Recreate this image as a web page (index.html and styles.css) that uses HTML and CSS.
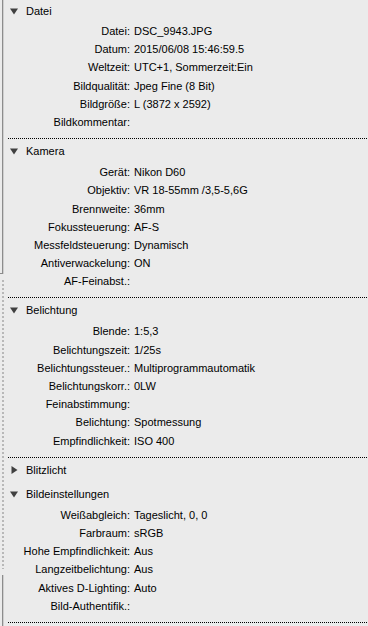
FILE: index.html
```html
<!DOCTYPE html>
<html lang="de">
<head>
<meta charset="utf-8">
<title>Bildinformationen</title>
<link rel="stylesheet" href="styles.css">
</head>
<body>
<div class="panel">
  <div class="rail">
    <div class="rail-solid rail-top"></div>
    <div class="rail-gap"></div>
    <div class="rail-dotted"></div>
    <div class="rail-gap"></div>
    <div class="rail-solid rail-bottom"></div>
  </div>
  <div class="main">
    <section class="section first">
      <div class="header">
        <svg class="tri" width="8" height="8" viewBox="0 0 8 8"><polygon points="0,1.5 8,1.5 4,7.5" /></svg>
        <span>Datei</span>
      </div>
      <div class="rows">
        <div class="label">Datei:</div><div class="value">DSC_9943.JPG</div>
        <div class="label">Datum:</div><div class="value">2015/06/08 15:46:59.5</div>
        <div class="label">Weltzeit:</div><div class="value">UTC+1, Sommerzeit:Ein</div>
        <div class="label">Bildqualität:</div><div class="value">Jpeg Fine (8 Bit)</div>
        <div class="label">Bildgröße:</div><div class="value">L (3872 x 2592)</div>
        <div class="label">Bildkommentar:</div><div class="value"></div>
      </div>
    </section>
    <div class="sep"></div>
    <section class="section">
      <div class="header">
        <svg class="tri" width="8" height="8" viewBox="0 0 8 8"><polygon points="0,1.5 8,1.5 4,7.5" /></svg>
        <span>Kamera</span>
      </div>
      <div class="rows">
        <div class="label">Gerät:</div><div class="value">Nikon D60</div>
        <div class="label">Objektiv:</div><div class="value">VR 18-55mm /3,5-5,6G</div>
        <div class="label">Brennweite:</div><div class="value">36mm</div>
        <div class="label">Fokussteuerung:</div><div class="value">AF-S</div>
        <div class="label">Messfeldsteuerung:</div><div class="value">Dynamisch</div>
        <div class="label">Antiverwackelung:</div><div class="value">ON</div>
        <div class="label">AF-Feinabst.:</div><div class="value"></div>
      </div>
    </section>
    <div class="sep"></div>
    <section class="section">
      <div class="header">
        <svg class="tri" width="8" height="8" viewBox="0 0 8 8"><polygon points="0,1.5 8,1.5 4,7.5" /></svg>
        <span>Belichtung</span>
      </div>
      <div class="rows">
        <div class="label">Blende:</div><div class="value">1:5,3</div>
        <div class="label">Belichtungszeit:</div><div class="value">1/25s</div>
        <div class="label">Belichtungssteuer.:</div><div class="value">Multiprogrammautomatik</div>
        <div class="label">Belichtungskorr.:</div><div class="value">0LW</div>
        <div class="label">Feinabstimmung:</div><div class="value"></div>
        <div class="label">Belichtung:</div><div class="value">Spotmessung</div>
        <div class="label">Empfindlichkeit:</div><div class="value">ISO 400</div>
      </div>
    </section>
    <div class="sep"></div>
    <section class="section collapsed">
      <div class="header">
        <svg class="tri" width="8" height="8" viewBox="0 0 8 8"><polygon points="1.5,0 7.5,4 1.5,8" /></svg>
        <span>Blitzlicht</span>
      </div>
    </section>
    <section class="section">
      <div class="header">
        <svg class="tri" width="8" height="8" viewBox="0 0 8 8"><polygon points="0,1.5 8,1.5 4,7.5" /></svg>
        <span>Bildeinstellungen</span>
      </div>
      <div class="rows">
        <div class="label">Weißabgleich:</div><div class="value">Tageslicht, 0, 0</div>
        <div class="label">Farbraum:</div><div class="value">sRGB</div>
        <div class="label">Hohe Empfindlichkeit:</div><div class="value">Aus</div>
        <div class="label">Langzeitbelichtung:</div><div class="value">Aus</div>
        <div class="label">Aktives D-Lighting:</div><div class="value">Auto</div>
        <div class="label">Bild-Authentifik.:</div><div class="value"></div>
      </div>
    </section>
    <div class="sep"></div>
  </div>
</div>
</body>
</html>
```

FILE: styles.css
```css
html, body {
  margin: 0;
  padding: 0;
}
body {
  width: 368px;
  height: 626px;
  overflow: hidden;
  background: #ebebeb;
  font-family: "Liberation Sans", Arial, sans-serif;
  font-size: 11px;
  color: #000;
}
.panel {
  display: flex;
  height: 626px;
}
.rail {
  width: 8px;
  flex: none;
  display: flex;
  flex-direction: column;
}
.rail-solid {
  margin-left: 2px;
  width: 1px;
  background: #8c8c8c;
  box-shadow: 1px 0 0 #cfcfcf;
}
.rail-top {
  height: 274px;
  position: relative;
}
.rail-top::after {
  content: "";
  position: absolute;
  left: -2px;
  bottom: 0;
  width: 3px;
  height: 1px;
  background: #8c8c8c;
}
.rail-bottom {
  flex: 1;
}
.rail-gap {
  height: 6px;
}
.rail-dotted {
  height: 289px;
  margin-left: 2px;
  width: 2px;
  background: repeating-linear-gradient(to bottom, #b8b8b8 0 2px, transparent 2px 4px);
}
.main {
  flex: 1;
  min-width: 0;
}
.header {
  display: flex;
  align-items: center;
  height: 24px;
  padding-left: 2px;
  gap: 8px;
}
.first .header {
  height: 22px;
}
.tri {
  flex: none;
  fill: #404040;
}
.rows {
  display: grid;
  grid-template-columns: 122px 1fr;
  grid-auto-rows: 18.2px;
  column-gap: 4px;
  padding-bottom: 7px;
  line-height: 18.2px;
}
.label {
  text-align: right;
  white-space: nowrap;
}
.value {
  white-space: nowrap;
}
.sep {
  height: 1px;
  background: repeating-linear-gradient(to right, #000 0 1px, transparent 1px 2px);
}
```
